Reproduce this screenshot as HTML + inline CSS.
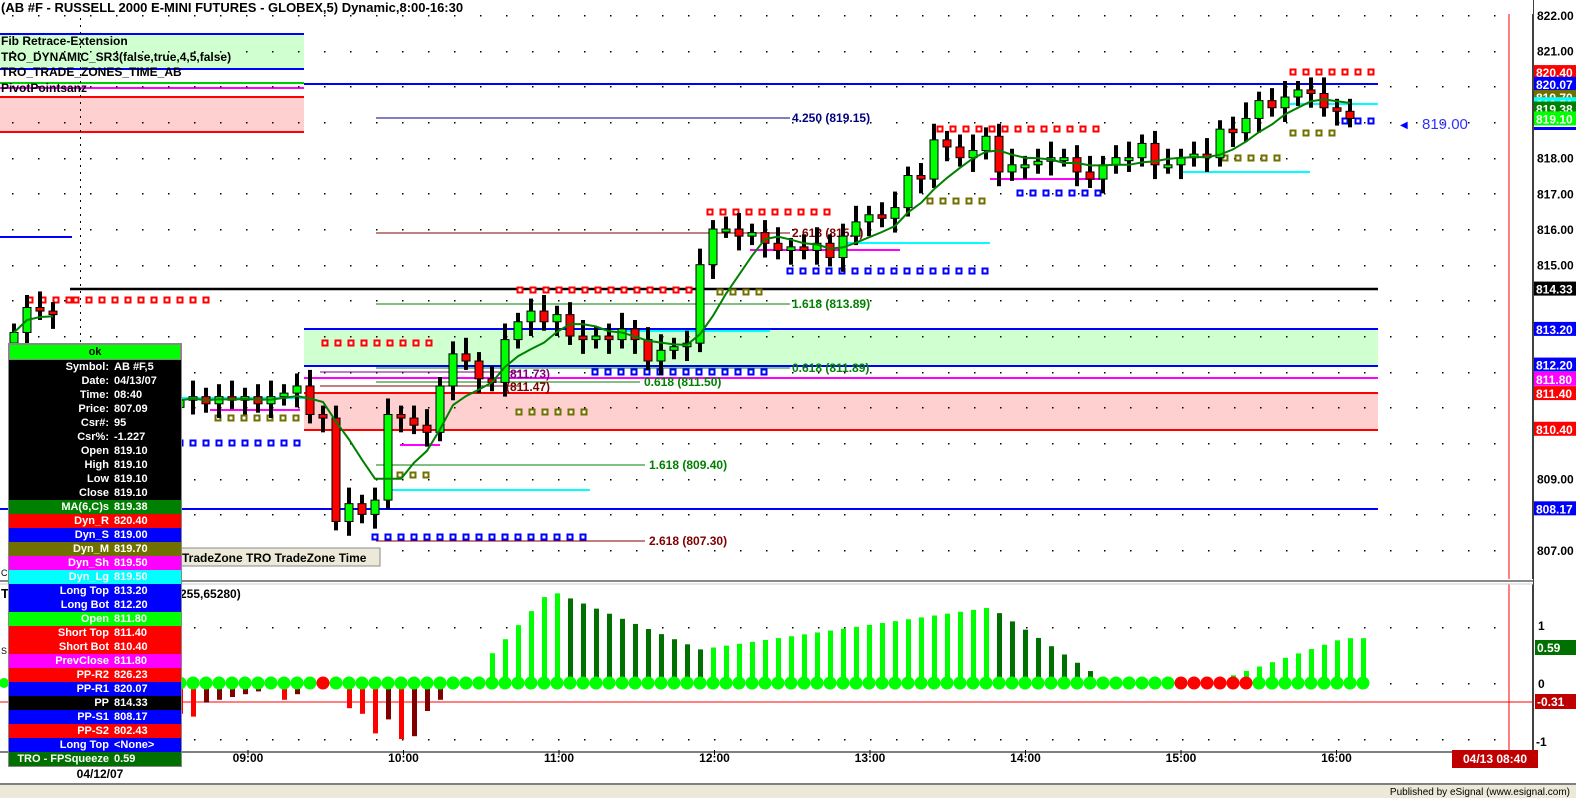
<!DOCTYPE html>
<html><head><meta charset="utf-8"><style>
html,body{margin:0;padding:0;background:#fff;overflow:hidden}
svg{display:block;font-family:"Liberation Sans",Arial,sans-serif}
#dw{position:absolute;left:8px;top:343px;width:172px;border:1px solid #888;background:#000;font:bold 11px "Liberation Sans",Arial,sans-serif;color:#fff}
#dw div{height:14px;line-height:14px;display:flex}
#dw b{display:block;width:100px;text-align:right;padding-right:5px;font-weight:bold}
#dw i{font-style:normal}
</style></head><body>
<svg id="s" width="1576" height="798" xmlns="http://www.w3.org/2000/svg"></svg>
<div id="dw"></div>
<script>
const S=document.getElementById('s');let h='';
const Y=p=>15+(822-p)*35.67;
const LZ=683,LU=56;
function r(x,y,w,hh,f,st){h+=`<rect x="${x}" y="${y}" width="${w}" height="${hh}" fill="${f}"${st?` stroke="${st}" stroke-width="1"`:''}/>`;}
function l(x1,y1,x2,y2,c,w){h+=`<line x1="${x1}" y1="${y1}" x2="${x2}" y2="${y2}" stroke="${c}" stroke-width="${w||1}"/>`;}
function t(x,y,s,c,sz,b,a){h+=`<text x="${x}" y="${y}" fill="${c}" font-size="${sz}" ${b?'font-weight="bold"':''} ${a?`text-anchor="${a}"`:''}>${s}</text>`;}
r(0,34,304,35,'#d0ffd0');l(0,34,304,34,'#0000ff',2);l(0,69,304,69,'#0000ff',2);
r(0,97,304,35,'#ffd0d0');l(0,97,304,97,'#ff0000',2);l(0,132,304,132,'#ff0000',2);
l(0,83,304,83,'#00cc00',2);l(0,88,304,88,'#ff00ff',2);
r(304,329,1074,37,'#d0ffd0');r(304,393,1074,37,'#ffd0d0');
l(304,329,1378,329,'#0000ff',2);l(304,366,1378,366,'#0000ff',2);
l(304,393,1378,393,'#ff0000',2);l(304,430,1378,430,'#ff0000',2);
l(304,378,1378,378,'#ff00ff',2);
l(0,509,1378,509,'#0000ff',2);l(304,84,1378,84,'#0000ff',2);l(0,237,72,237,'#0000ff',2);
l(70,289,1378,289,'#000',2.5);
for(let p=807;p<=822;p++){let y=Math.round(Y(p));for(let x=12;x<1520;x+=26)r(x,y,1.5,1.5,'#000');}
for(let v of[-1,0,1]){let y=LZ-v*LU;for(let x=12;x<1520;x+=26)r(x,y,1.5,1.5,'#000');}
for(let y=4;y<750;y+=7)r(80,y,1,2,'#000');
const F=[[118,376,790,'#000080','4.250 (819.15)'],[233,376,790,'#800000','2.618 (815.9)'],[304,376,790,'#008000','1.618 (813.89)'],[368,376,790,'#008000','0.618 (811.89)'],[382,376,640,'#008000','0.618 (811.50)'],[465,376,645,'#008000','1.618 (809.40)'],[541,376,645,'#800000','2.618 (807.30)']];
F.forEach(f=>{l(f[1],f[0],f[2],f[0],f[3],1);t(f[2]+(f[2]>700?2:4),f[0]+4,f[4],f[3],12,1);});
l(320,372,520,372,'#800080',1);l(320,386,520,386,'#800000',1);
t(506,378,'(811.73)','#800080',12,1);t(506,391,'(811.47)','#800000',12,1);
[[172,1180,1310],[243,840,990],[331,620,770],[490,390,590],[398,180,310],[104,1290,1378]].forEach(c=>l(c[1],c[0],c[2],c[0],'#00ffff',2));
[[179,990,1100],[410,210,300],[445,400,440],[250,750,900]].forEach(c=>l(c[1],c[0],c[2],c[0],'#ff00ff',2));
function sq(y,x1,x2,c){for(let x=x1;x<=x2;x+=13){h+=`<rect x="${x-2.5}" y="${y-2.5}" width="5" height="5" fill="#fff" stroke="${c}" stroke-width="2"/>`;}}
sq(72,1293,1373,'#ff0000');sq(129,940,1100,'#ff0000');sq(212,710,830,'#ff0000');sq(300,30,70,'#ff0000');sq(300,76,212,'#ff0000');sq(343,325,435,'#ff0000');sq(290,520,690,'#ff0000');
sq(121,1345,1373,'#0000ff');sq(193,1020,1110,'#0000ff');sq(271,790,985,'#0000ff');sq(372,595,765,'#0000ff');sq(443,180,300,'#0000ff');sq(537,375,585,'#0000ff');
sq(133,1293,1335,'#707000');sq(201,930,985,'#707000');sq(292,720,765,'#707000');sq(412,519,586,'#707000');sq(418,218,300,'#707000');sq(475,400,430,'#707000');sq(158,1225,1285,'#707000');
const C=[[14,813.1],[27,813.8],[40,813.7],[53,813.6],[180,811.2],[193,811.3],[206,811.1],[219,811.3],[232,811.2],[245,811.3],[258,811.1],[271,811.3],[284,811.4],[297,811.6],[310,810.8],[323,810.7],[336,807.8],[349,808.3],[362,808.0],[375,808.4],[388,810.8],[401,810.7],[414,810.5],[427,810.3],[440,811.6],[453,812.5],[466,812.3],[479,811.8],[492,811.7],[505,812.9],[518,813.4],[531,813.7],[544,813.4],[557,813.6],[570,813.0],[583,812.9],[596,813.0],[609,812.9],[622,813.2],[635,812.9],[648,812.3],[661,812.6],[674,812.7],[687,812.8],[700,815.0],[713,816.0],[726,816.0],[739,815.8],[752,815.9],[765,815.6],[778,815.4],[791,815.5],[804,815.4],[817,815.6],[830,815.2],[843,815.8],[856,816.2],[869,816.4],[882,816.3],[895,816.6],[908,817.5],[921,817.4],[934,818.5],[947,818.3],[960,818.0],[973,818.2],[986,818.6],[999,817.6],[1012,817.8],[1025,817.8],[1038,817.9],[1051,818.0],[1064,818.0],[1077,817.6],[1090,817.4],[1103,817.8],[1116,818.0],[1129,818.0],[1142,818.4],[1155,817.8],[1168,817.8],[1181,818.0],[1194,818.1],[1207,818.0],[1220,818.8],[1233,818.7],[1246,819.1],[1259,819.6],[1272,819.4],[1285,819.7],[1298,819.9],[1311,819.8],[1324,819.4],[1337,819.3],[1350,819.1]];
let ma='',ma0='';let prev=C[0][1]-0.3;
C.forEach((c,i)=>{let o=prev,cl=c[1];if(i==4)o=811.0;let hi=Math.max(o,cl)+0.25+(i%3)*0.1,lo=Math.min(o,cl)-0.25-(i%2)*0.15;
 l(c[0],Y(hi),c[0],Y(lo),'#000',4);let top=Y(Math.max(o,cl)),bh=Math.max(3,Math.abs(Y(o)-Y(cl)));
 r(c[0]-4,top,8,bh,cl>=o?'#00ff00':'#ff0000','#000');prev=cl;
 let s=0,n=0,k0=i<4?0:Math.max(4,i-5);for(let k=k0;k<=i;k++){s+=C[k][1];n++;}
 if(i<4)ma0+=(ma0?'L':'M')+c[0]+' '+Y(s/n).toFixed(1);else ma+=(ma?'L':'M')+c[0]+' '+Y(s/n).toFixed(1);});
h+=`<path d="${ma0}" fill="none" stroke="#008000" stroke-width="2"/><path d="${ma}" fill="none" stroke="#008000" stroke-width="2"/>`;
r(1534,0,42,752,'#fff');l(1533,0,1533,752,'#000',1.5);l(1509,0,1509,752,'#ff0000',1);
for(let p=807;p<=822;p++){if([814,813,812,811,810,808,820,819].includes(p))continue;t(1537,Y(p)+5,p+'.00','#000',12,1);}
const T=[[820.40,'#ff0000'],[820.07,'#0000ff'],[819.70,'#707000'],[819.50,'#00ffff'],[819.38,'#008000'],[819.10,'#00ff00'],[814.33,'#000'],[813.20,'#0000ff'],[812.20,'#0000ff'],[811.80,'#ff00ff'],[811.40,'#ff0000'],[810.40,'#ff0000'],[808.17,'#0000ff']];
T.forEach(a=>{let y=Y(a[0]);r(1534,y-7,42,14,a[1]);t(1536,y+5,a[0].toFixed(2),'#fff',12,1);});
r(1534,127,42,3,'#0000ff');
t(1400,128,'◀','#0000ff',10);t(1422,129,'819.00','#3030ff',15);
r(0,0,1533,14,'#fff');t(1,12,'(AB #F - RUSSELL 2000 E-MINI FUTURES - GLOBEX,5) Dynamic,8:00-16:30','#000',13,1);
t(1,45,'Fib Retrace-Extension','#000',12,1);t(1,61,'TRO_DYNAMIC_SR3(false,true,4,5,false)','#000',12,1);t(1,76,'TRO_TRADE_ZONES_TIME_AB','#000',12,1);t(1,92,'PivotPointsanz','#000',12,1);
r(0,579,1533,5,'#fff');l(0,581,1533,581,'#888',2);l(0,584,1533,584,'#ccc',1);
t(1,598,'T','#000',13,1);t(180,598,'255,65280)','#000',12,1);t(1,654,'S','#000',9);t(1,576,'C','#000',9);
r(180,548,200,18,'#ece9d8','#888');t(182,562,'TradeZone  TRO  TradeZone  Time','#000',12,1);
l(0,702,1533,702,'#ff0000',1);
const EARLY=[-0.55,-0.6,-0.35,-0.3,-0.25,-0.2,-0.15,-0.1,-0.3,-0.2,-0.1,-0.05,0,-0.45,-0.55,-0.9,-0.65,-1.0,-0.95,-0.5,-0.3];
const V=[];for(let i=0;i<93;i++){let x=180+i*13;let v;
 if(i<EARLY.length)v=EARLY[i];
 else if(x<480)v=-0.05+(x-453)/300;else if(x<550)v=0.3+(x-480)/70*1.35;else if(x<700)v=1.65-(x-550)/150*1.05;
 else if(x<990)v=0.6+(x-700)/290*0.75;else if(x<1100)v=1.35-(x-990)/110*1.25;else if(x<1230)v=0.03;else v=Math.min(0.8,0.12+(x-1230)/100*0.6);
 if(x>1370)break;V.push([x,v]);}
V.forEach((p,i)=>{let [x,v]=p;let up=i>0&&v>=V[i-1][1];let c=v>=0?(up?'#00ff00':'#007000'):(up?'#800000':'#ff0000');
 if(v>=0)r(x-2,LZ-v*LU,5,v*LU,c);else r(x-2,LZ,5,-v*LU,c);});
V.forEach(p=>{let x=p[0];let red=(x>320&&x<330)||(x>1180&&x<1250);h+=`<circle cx="${x}" cy="${LZ}" r="6.5" fill="${red?'#ff0000':'#00ff00'}"/>`;});
h+=`<circle cx="4" cy="${LZ}" r="5" fill="#00ff00"/>`;
t(1538,630,'1','#000',12,1);t(1538,688,'0','#000',12,1);t(1536,746,'-1','#000',12,1);
r(1535,640,42,15,'#007000');t(1537,652,'0.59','#fff',12,1);r(1535,694,42,15,'#c00000');t(1537,706,'-0.31','#fff',12,1);
l(0,752,1533,752,'#000',1);r(0,753,1576,32,'#fff');
['09:00','10:00','11:00','12:00','13:00','14:00','15:00','16:00'].forEach((s,i)=>{let x=248+i*155.5;l(x,750,x,755,'#000',1);t(x,762,s,'#000',12,1,'middle');});
t(100,778,'04/12/07','#000',12,1,'middle');
r(1452,750,86,18,'#c00000');t(1495,763,'04/13 08:40','#fff',12,1,'middle');
l(0,784,1576,784,'#000',1);r(0,785,1576,13,'#ece9d8');t(1570,795,'Published by eSignal (www.esignal.com)','#000',10,0,'end');
S.innerHTML=h;
const R=[['','ok'],['Symbol:','AB #F,5'],['Date:','04/13/07'],['Time:','08:40'],['Price:','807.09'],['Csr#:','95'],['Csr%:','-1.227'],['Open','819.10'],['High','819.10'],['Low','819.10'],['Close','819.10'],
['MA(6,C)s','819.38','#008000'],['Dyn_R','820.40','#ff0000'],['Dyn_S','819.00','#0000ff'],['Dyn_M','819.70','#707000'],['Dyn_Sh','819.50','#ff00ff'],['Dyn_Lg','819.50','#00ffff'],['Long Top','813.20','#0000ff'],['Long Bot','812.20','#0000ff'],['Open','811.80','#00ff00'],['Short Top','811.40','#ff0000'],['Short Bot','810.40','#ff0000'],['PrevClose','811.80','#ff00ff'],['PP-R2','826.23','#ff0000'],['PP-R1','820.07','#0000ff'],['PP','814.33','#000'],['PP-S1','808.17','#0000ff'],['PP-S2','802.43','#ff0000'],['Long Top','&lt;None&gt;','#0000ff'],['TRO - FPSqueeze','0.59','#007000']];
let d='';R.forEach((a,i)=>{if(i==0)d+=`<div style="background:#00ff00;color:#000;justify-content:center;border:1px solid #888">ok</div>`;else d+=`<div style="background:${a[2]||'#000'}"><b>${a[0]}</b><i>${a[1]}</i></div>`;});
document.getElementById('dw').innerHTML=d;
</script>
</body></html>
